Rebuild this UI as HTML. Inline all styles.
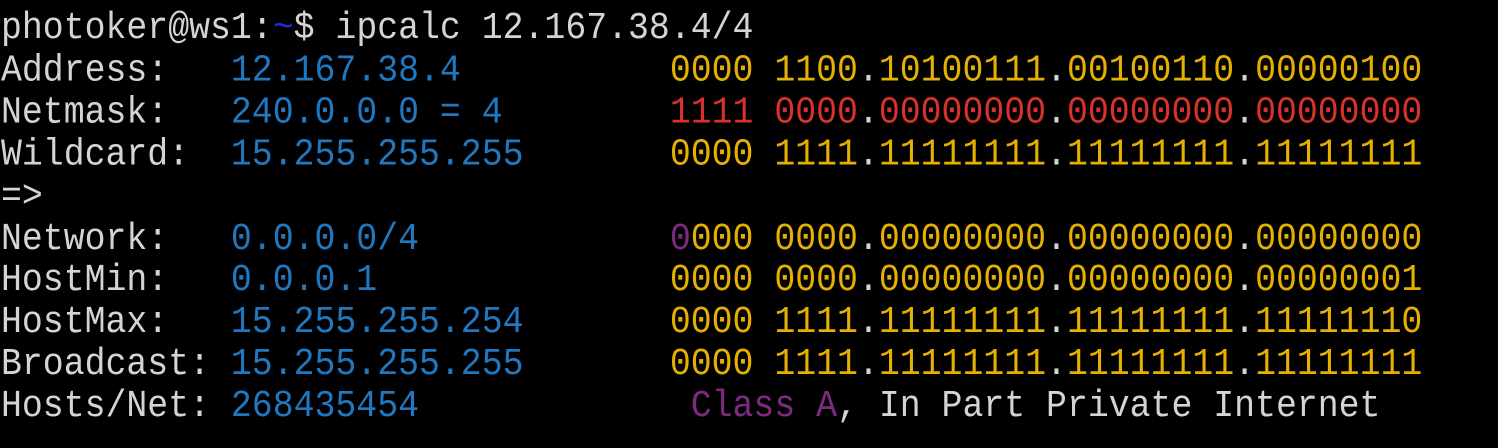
<!DOCTYPE html>
<html><head><style>
body{margin:0;background:#000;width:1498px;height:448px;overflow:hidden}
pre{margin:0;position:absolute;left:1px;font-family:"Liberation Mono",monospace;font-size:34.85px;color:#d4d4d4;letter-spacing:0;transform:scaleY(1.08);transform-origin:0 0}
.b{color:#1f78c0}.y{color:#e6b000}.r{color:#d8322a}.p{color:#7e2a80}.t{color:#1a2ee0}
</style></head><body>
<pre style="line-height:38.9px;top:9px">photoker@ws1:<span class="t">~</span>$ ipcalc 12.167.38.4/4
Address:   <span class="b">12.167.38.4</span>          <span class="y">0000 1100</span>.<span class="y">10100111</span>.<span class="y">00100110</span>.<span class="y">00000100</span>
Netmask:   <span class="b">240.0.0.0 = 4</span>        <span class="r">1111 0000</span>.<span class="r">00000000</span>.<span class="r">00000000</span>.<span class="r">00000000</span>
Wildcard:  <span class="b">15.255.255.255</span>       <span class="y">0000 1111</span>.<span class="y">11111111</span>.<span class="y">11111111</span>.<span class="y">11111111</span>
=&gt;
Network:   <span class="b">0.0.0.0/4</span>            <span class="p">0</span><span class="y">000 0000</span>.<span class="y">00000000</span>.<span class="y">00000000</span>.<span class="y">00000000</span>
HostMin:   <span class="b">0.0.0.1</span>              <span class="y">0000 0000</span>.<span class="y">00000000</span>.<span class="y">00000000</span>.<span class="y">00000001</span>
HostMax:   <span class="b">15.255.255.254</span>       <span class="y">0000 1111</span>.<span class="y">11111111</span>.<span class="y">11111111</span>.<span class="y">11111110</span>
Broadcast: <span class="b">15.255.255.255</span>       <span class="y">0000 1111</span>.<span class="y">11111111</span>.<span class="y">11111111</span>.<span class="y">11111111</span>
Hosts/Net: <span class="b">268435454</span>             <span class="p">Class A</span>, In Part Private Internet
</pre>
</body></html>
